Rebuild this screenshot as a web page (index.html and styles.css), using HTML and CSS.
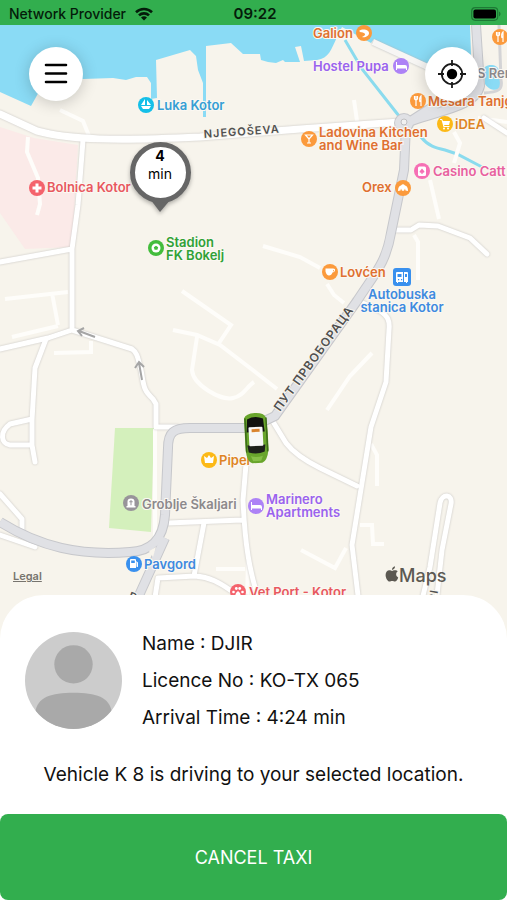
FILE: index.html
```html
<!DOCTYPE html>
<html lang="en">
<head>
  <meta charset="UTF-8">
  <meta name="viewport" content="width=device-width, initial-scale=1.0">
  <title>Taxi</title>
  <link rel="stylesheet" href="styles.css">
</head>
<body>
<div class="app">
  <header class="status-bar">
    <div class="carrier">
      <span>Network Provider</span>
      <svg width="20" height="14" viewBox="0 0 20 14" aria-hidden="true">
        <path d="M2 5.2a11.5 11.5 0 0 1 16 0M5 8.4a7.2 7.2 0 0 1 10 0" fill="none" stroke="#041c0a" stroke-width="2.6"/>
        <path d="M7 10.6a4.4 4.4 0 0 1 6 0L10 13.6z" fill="#041c0a"/>
      </svg>
    </div>
    <span class="clock">09:22</span>
    <svg class="battery" width="30" height="14" viewBox="0 0 30 14" aria-hidden="true">
      <rect x=".7" y=".7" width="26" height="12.6" rx="3.5" fill="none" stroke="#1d7a35" stroke-width="1.2"/>
      <rect x="2.4" y="2.4" width="22.6" height="9.2" rx="2" fill="#000"/>
      <path d="M28 4.6v4.8c2-.8 2-4 0-4.8z" fill="#1d7a35"/>
    </svg>
  </header>

  <main class="map">
    <svg class="map-canvas" viewBox="0 25 507 614" preserveAspectRatio="xMidYMin slice" role="img" aria-label="Map of Kotor">
      <!-- sea -->
      <path class="water" d="M0 25H470L472 83L425 66L374 39L371 43L342 27L337 37C331 50 329 58 317 60L304 61L301 46L295 47L300 62L285 62L283 60L276 63L268 62L261 60L260 54H243L231 43L206 46V117H203V83L198 70L196 56L190 50L156 60L157 98L151 99L151 83L147 77L136 77L126 80L113 78L83 79L40 90L31 106L0 92Z"/>
      <path class="pier" d="M373 42L432 69"/>
      <path class="water" d="M484 72c-3-8 14-10 15-1l2 17c-6 4-13 1-16-4z"/>
      <path class="stream" d="M345 40L362 69L399 116M421 137C428 146 436 148 445 150L457 154L482 167"/>

      <!-- areas -->
      <path class="hospital" d="M0 127L34 138L78 145L72 247L25 249L0 213Z"/>
      <path class="park" d="M115 428H154L151 532L109 528Z"/>

      <!-- small lanes -->
      <g class="lanes">
        <path d="M60 110L83 121L89 136M28 137L27 152L38 178L40 204L37 215"/>
        <path d="M5 299L68 292M52 293L58 325M12 337L58 326M54 353L91 352V341"/>
        <path d="M182 291L231 325L219 343M173 330L197 335L220 345L254 371L277 389M197 337L192 370C193 385 221 401 233 398C244 396 246 387 254 382"/>
        <path d="M263 246L300 257L320 268M327 284L334 295L344 303"/>
        <path d="M430 180L439 219M414 235L418 242V280M357 121L354 100"/>
        <path d="M454 132L460 143L454 163M478 118L507 122M327 410L350 376L372 353"/>
        <path d="M371 444L377 455V486M360 525H372L373 544H384M301 550L335 568L346 548"/>
        <path d="M155 429V540M216 569H245M248 560L247 600"/>
      </g>

      <!-- streets -->
      <g class="streets">
        <path d="M0 114L37 131C70 140 115 141 200 137L300 129L400 122"/>
        <path class="street" d="M83 140L78 205L72 249L72 330M0 262L72 249M0 349L48 338L72 330L132 349C138 353 138 360 141 370C144 386 143 390 153 399L156 404V427H178"/>
        <path class="street" d="M46 339L35 368L32 420V445L35 462M32 419L10 424C-1 432 1 444 10 445H32"/>
        <path class="street" d="M396 230L411 230L419 225L438 226L470 238L487 254"/>
        <path class="street" d="M356 300L380 311C388 316 390 321 389 330L386 382L371 427L352 545L359 604"/>
        <path class="street" d="M272 420L286 443C295 455 310 463 320 468L357 486"/>
        <path class="street" d="M0 494L22 519V535M0 535L35 547M168 523L242 520M246 464L243 500C245 545 249 570 260 604M204 523L194 576M154 604L158 578L195 576C210 577 220 583 230 590L250 600"/>
        <path class="street" d="M421 604L430 567L440 503C442 493 453 494 451 504L442 550L436 604"/>
        <path class="street" d="M484 118L507 133"/>
      </g>

      <!-- main road -->
      <g class="road-edge">
        <path d="M0 522C40 547 80 556 130 552C150 551 163 541 165 515L168 448C168 432 174 428 190 428L250 428L275 416L357 301C375 273 386 263 391 233L404 170L406 125"/>
        <path d="M165 538L136 602M400 126C425 112 475 110 480 86L476 25M406 124L440 102"/>
        <circle cx="404" cy="123" r="5"/>
      </g>
      <g class="road">
        <path d="M0 522C40 547 80 556 130 552C150 551 163 541 165 515L168 448C168 432 174 428 190 428L250 428L275 416L357 301C375 273 386 263 391 233L404 170L406 125"/>
        <path d="M165 538L136 602M400 126C425 112 475 110 480 86L476 25M406 124L440 102"/>
        <circle cx="404" cy="123" r="5"/>
      </g>
      <path d="M149 551L156 547L153 557Z" fill="#f8f5ed"/>
      <circle class="roundabout" cx="404" cy="122" r="3"/>
      <path class="road-thin" d="M484 93C498 92 503 90 501 80L499 25"/>

      <!-- one way arrows -->
      <g class="arrows">
        <path d="M95 337L79 331M84 328L78 331L82 336"/>
        <path d="M142 380L139 363M135 368L139 362L144 367"/>
      </g>

      <!-- street names -->
      <text class="street-name" transform="translate(204 138) rotate(-4)">NJEGOŠEVA</text>
      <text class="street-name large" transform="translate(280 412) rotate(-54)">ПУТ ПРВОБОРАЦА</text>
      <text class="street-name" transform="translate(128 599) rotate(20)">D</text>
      <text class="street-name" transform="translate(436 602) rotate(-80)">RI</text>

      <!-- places -->
      <g class="place cyan">
        <circle cx="146" cy="105" r="8"/>
        <path class="glyph" d="M145 99v6h-4zM147 100l4 5h-4zM141 106h10l-2 3h-6z"/>
        <text x="157" y="110">Luka Kotor</text>
      </g>
      <g class="place orange">
        <circle cx="364" cy="33" r="8"/>
        <path class="glyph" d="M359 31c4-3 10-1 10 2s-4 5-7 4c3-1 4-3 2-4s-3 0-5-2z"/>
        <text x="313" y="38">Galion</text>
      </g>
      <g class="place violet">
        <circle cx="401" cy="66" r="8"/>
        <path class="glyph" d="M396 62h1v3h8q2 0 2 2v3h-1v-1.500h-9V70h-1z"/>
        <text x="313" y="71">Hostel Pupa</text>
      </g>
      <g class="place orange">
        <circle cx="500" cy="37" r="8"/>
        <path class="glyph-line" d="M496.500 32v3q1.500 2 3 0v-3M498 32v10M503 42V32q-2 2-1 6"/>
      </g>
      <g class="place orange">
        <circle cx="418" cy="101" r="8"/>
        <path class="glyph-line" d="M414.500 96v3q1.500 2 3 0v-3M416 96v10M421 106V96q-2 2-1 6"/>
        <text x="428" y="106">Mesara Tanjg</text>
      </g>
      <g class="place gray">
        <text x="477" y="78">S Ren</text>
      </g>
      <g class="place yellow">
        <circle cx="445" cy="124" r="8"/>
        <path class="glyph" d="M440 119h2l1 2h7l-1 4h-5l.5 1h5v1h-6l-2-7h-1.500z"/>
        <circle class="glyph" cx="444" cy="128.500" r="1"/><circle class="glyph" cx="448" cy="128.500" r="1"/>
        <text x="455" y="129">iDEA</text>
      </g>
      <g class="place orange">
        <circle cx="309" cy="139" r="8"/>
        <path class="glyph-line" d="M305.500 135h7l-3.500 4zM309 139v4M307 143h4"/>
        <text x="319" y="137">Ladovina Kitchen</text>
        <text x="319" y="150">and Wine Bar</text>
      </g>
      <g class="place pink">
        <circle cx="422" cy="171" r="8"/>
        <rect class="glyph" x="418" y="166.500" width="8" height="9.500" rx="1.500"/>
        <path d="M422 168.500l2.500 3q0 1.500-2 1.300l.5 1h-2l.5-1q-2 .2-2-1.300z"/>
        <text x="433" y="176">Casino Catt</text>
      </g>
      <g class="place orange">
        <circle cx="403" cy="188" r="8"/>
        <path class="glyph" d="M398 191q0-5 3-5.500q2-2.500 4 0q3 .5 3 5.500l-2.500-.5-.5-2-1 2.200h-2l-1-2.200-.5 2z"/>
        <text x="362" y="192">Orex</text>
      </g>
      <g class="place red">
        <circle cx="37" cy="188" r="8"/>
        <path class="glyph" d="M35.500 183.500h3v3h3v3h-3v3h-3v-3h-3v-3h3z"/>
        <text x="47" y="192">Bolnica Kotor</text>
      </g>
      <g class="place green">
        <circle cx="156" cy="248" r="8"/>
        <circle class="glyph" cx="156" cy="248" r="4.500"/>
        <path d="M156 245.700l2.200 1.600-.8 2.500h-2.800l-.8-2.500z"/>
        <text x="166" y="247">Stadion</text>
        <text x="166" y="260">FK Bokelj</text>
      </g>
      <g class="place orange">
        <circle cx="330" cy="272" r="8"/>
        <path class="glyph" d="M325.500 268.500h7.500q2.500 0 2 2t-2.500 2q-1 3-3.500 3t-3.500-4zM333 269.800v1.800q1-.2 1-1z"/>
        <text x="340" y="277">Lovćen</text>
      </g>
      <g class="place blue">
        <rect x="393" y="268" width="18" height="18" rx="3"/>
        <path class="glyph" d="M396 273q0-1 1-1h6v10h-5v1h-1v-1h-1zM404 272h3q1 0 1 1v9h-1v1h-1v-1h-2z"/>
        <path d="M397.500 274h4v3h-4zM405 274h2v3h-2zM398 279h1.200v1.200H398zM401 279h1.200v1.200H401z"/>
        <text class="middle" x="402" y="299">Autobuska</text>
        <text class="middle" x="402" y="312">stanica Kotor</text>
      </g>
      <g class="place yellow">
        <circle cx="209" cy="460" r="8"/>
        <path class="glyph" d="M204 456l3 2 2-3 2 3 3-2-1 7h-8z"/>
        <text x="219" y="465">Piper</text>
      </g>
      <g class="place gray">
        <circle cx="131" cy="503" r="8"/>
        <path class="glyph" d="M127.500 506v-4.500q0-3 3.500-3t3.500 3v4.500h1v1.500h-9V506z"/>
        <path d="M130.500 500h1v1.200h1.200v1h-1.200v3h-1v-3h-1.200v-1h1.200z"/>
        <text x="142" y="509">Groblje Škaljari</text>
      </g>
      <g class="place violet">
        <circle cx="256" cy="506" r="8"/>
        <path class="glyph" d="M251 502h1v3h8q2 0 2 2v3h-1v-1.500h-9v1.500h-1z"/>
        <text x="266" y="504">Marinero</text>
        <text x="266" y="517">Apartments</text>
      </g>
      <g class="place blue">
        <circle cx="134" cy="564" r="8"/>
        <path class="glyph" d="M130 560q0-1 1-1h4q1 0 1 1v8h-6zM136 561l2 1.500v4q-.5 1-1.500 0v-3z"/>
        <path d="M131.200 560.500h3.600v2.500h-3.600z"/>
        <text x="144" y="569">Pavgord</text>
      </g>
      <g class="place red">
        <circle cx="238" cy="592" r="8"/>
        <g class="glyph">
          <circle cx="233.500" cy="592" r="1.300"/><circle cx="236.300" cy="588.500" r="1.400"/>
          <circle cx="239.700" cy="588.500" r="1.400"/><circle cx="242.500" cy="592" r="1.300"/>
          <path d="M238 591q3 2 3 5h-6q0-3 3-5z"/>
        </g>
        <text x="249" y="597">Vet Port - Kotor</text>
      </g>

      <!-- map provider -->
      <path class="apple" transform="translate(385 566)" d="M9.500 4.300C10.500 4.300 11.700 4 12.700 5.600C10.400 7 10.800 10.400 13.200 11.400C12.600 13.200 11.400 15.500 9.900 15.500C8.800 15.500 8.500 14.900 7.200 14.900S5.500 15.500 4.500 15.500C2.700 15.500.6 12 .6 8.900C.6 6 2.400 4.300 4.300 4.300C5.500 4.300 6.400 5 7.100 5C7.800 5 8.600 4.300 9.500 4.300ZM7 3.900C6.900 2 8.300.5 10 .3C10.200 2.300 8.600 3.900 7 3.900Z"/>
      <text class="provider" x="399" y="582">Maps</text>

      <!-- pickup point -->
      <g class="pickup">
        <path d="M150 199L160 212L171 199Z" fill="#666"/>
        <circle cx="160.500" cy="172.500" r="28" fill="#fff" stroke="#666" stroke-width="5"/>
      </g>
      <text class="eta-value" x="160" y="161">4</text>
      <text class="eta-unit" x="160" y="179">min</text>

      <!-- taxi -->
      <g transform="translate(256 438) rotate(-3)">
        <path d="M-11-20Q-9-25 0-25T11-20L12-6V12Q10 24 5 25H-5Q-10 24-11 12V-6Z" fill="#69a52c"/>
        <path d="M-10-20L-10 14M11-20V14" stroke="#3c6d18" stroke-width="1.500" fill="none"/>
        <path d="M-8-19Q0-23 8-19L9-6H-9Z" fill="#10120f"/>
        <path d="M-9 7H9L8 14Q0 17-8 14Z" fill="#1d211b"/>
        <rect x="-7" y="-11" width="14" height="19" rx="1" fill="#f7f8f7"/>
        <rect x="-4" y="-9" width="8" height="3" fill="#d98430"/>
        <path d="M-6 18Q0 20 6 18L4 23H-4Z" fill="#87bf48"/>
      </g>
    </svg>

    <div class="map-buttons">
      <button class="round-button" type="button" aria-label="Menu">
        <svg width="24" height="22" viewBox="0 0 24 22">
          <path d="M2 2h20M2 10.500h20M2 19h20" stroke="#000" stroke-width="2.600" stroke-linecap="round"/>
        </svg>
      </button>
      <button class="round-button" type="button" aria-label="My location">
        <svg width="30" height="30" viewBox="0 0 30 30">
          <circle cx="15" cy="15" r="10.200" fill="none" stroke="#1a1a1a" stroke-width="1.800"/>
          <circle cx="15" cy="15" r="5.200" fill="#000"/>
          <path d="M15 1v6M15 23v6M1 15h6M23 15h6" stroke="#1a1a1a" stroke-width="1.800"/>
        </svg>
      </button>
    </div>
    <a class="legal" href="#legal">Legal</a>
  </main>

  <section class="sheet">
    <div class="driver">
      <svg class="avatar" viewBox="0 0 96 96" role="img" aria-label="Driver">
        <clipPath id="avatar-clip"><circle cx="48" cy="48" r="48"/></clipPath>
        <g clip-path="url(#avatar-clip)">
          <rect width="96" height="96" fill="#ccc"/>
          <circle cx="48" cy="32" r="19" fill="#a9a9a9"/>
          <path d="M10 96V80C12 64 26 60 48 60S84 64 86 80V96Z" fill="#a9a9a9"/>
        </g>
      </svg>
      <div class="driver-info">
        <p>Name : DJIR</p>
        <p>Licence No : KO-TX 065</p>
        <p>Arrival Time : 4:24 min</p>
      </div>
    </div>
    <p class="message">Vehicle K 8 is driving to your selected location.</p>
    <button class="cancel" type="button">CANCEL TAXI</button>
  </section>
</div>
</body>
</html>
```
FILE: styles.css
```css
* {
  box-sizing: border-box;
}
body {
  margin: 0;
  font-family: Inter, Roboto, sans-serif;
  color: #111;
  background: #fff;
}
p {
  margin: 0;
}
.app {
  min-height: 100vh;
  display: flex;
  flex-direction: column;
}

/* status bar */
.status-bar {
  display: grid;
  grid-template-columns: 1fr auto 1fr;
  align-items: center;
  height: 25px;
  padding: 2px 6px 0 9px;
  background: #32ae4e;
  color: #041c0a;
  font-size: 14px;
}
.carrier {
  display: flex;
  align-items: center;
  gap: 8px;
  font-weight: 500;
}
.clock {
  font-size: 15px;
  font-weight: 600;
}
.battery {
  justify-self: end;
}

/* map */
.map {
  position: relative;
  flex: 1;
  min-height: 360px;
  background: #f7f4ec;
  overflow: hidden;
}
.map-canvas {
  position: absolute;
  inset: 0;
  width: 100%;
  height: 100%;
}
.water {
  fill: #8adbf5;
}
.stream {
  fill: none;
  stroke: #8adbee;
  stroke-width: 3;
}
.pier {
  stroke: #f7f6f4;
  stroke-width: 6;
  filter: drop-shadow(0 0 1px #b5b8ba);
}
.hospital {
  fill: #fbeae8;
}
.park {
  fill: #d4f0bc;
}
.lanes {
  fill: none;
  stroke: #fefdfa;
  stroke-width: 4;
}
.streets {
  fill: none;
  stroke: #fff;
  stroke-width: 7;
  stroke-linejoin: round;
  stroke-linecap: round;
  filter: drop-shadow(0 0 1px #c4c2c0);
}
.street {
  stroke-width: 5;
}
.road-edge,
.road {
  fill: none;
  stroke: #c6c7cb;
  stroke-width: 10;
  stroke-linejoin: round;
}
.road {
  stroke: #e0e1e5;
  stroke-width: 8;
}
.road-thin {
  fill: none;
  stroke: #d4d4d6;
  stroke-width: 3;
}
.roundabout {
  fill: #f1f1f1;
  stroke: #c0c0c2;
}
.arrows {
  fill: none;
  stroke: #a5a5a5;
  stroke-width: 2;
}
.street-name {
  font-size: 11px;
  font-weight: 600;
  letter-spacing: 1px;
  fill: #505050;
  stroke: #f7f4ec;
  stroke-width: 2px;
  paint-order: stroke;
}
.street-name.large {
  font-size: 12px;
}
.place text {
  font-size: 13px;
  font-weight: 600;
  stroke: #fbf8f2;
  stroke-width: 2px;
  paint-order: stroke;
}
.place .middle {
  text-anchor: middle;
}
.place .glyph {
  fill: #fff;
}
.place .glyph-line {
  fill: none;
  stroke: #fff;
  stroke-width: 1.2;
}
.cyan { fill: #14bfe8; }
.cyan text { fill: #369fd5; }
.orange { fill: #fb9a3c; }
.orange text { fill: #df7030; }
.violet { fill: #ad82f6; }
.violet text { fill: #9a63ee; }
.yellow { fill: #fcb917; }
.yellow text { fill: #de8425; }
.pink { fill: #f66fb4; }
.pink text { fill: #e8609f; }
.red { fill: #f4636c; }
.red text { fill: #e8585f; }
.green { fill: #43bd3c; }
.green text { fill: #30a136; }
.blue { fill: #3990ee; }
.blue text { fill: #3e8ae0; }
.gray { fill: #98949a; }
.gray text { fill: #8c898c; }

.apple {
  fill: #5c5952;
}
.provider {
  font-size: 18px;
  font-weight: 500;
  fill: #5c5952;
}
.pickup {
  filter: drop-shadow(0 2px 2px rgba(0, 0, 0, 0.3));
}
.eta-value,
.eta-unit {
  font-size: 14px;
  text-anchor: middle;
}
.eta-value {
  font-weight: 700;
}
.map-buttons {
  position: relative;
  display: flex;
  justify-content: space-between;
  padding: 22px 28px 0 29px;
}
.round-button {
  display: flex;
  align-items: center;
  justify-content: center;
  width: 54px;
  height: 54px;
  padding: 0;
  border: none;
  border-radius: 50%;
  background: #fff;
  box-shadow: 0 2px 16px rgba(0, 0, 0, 0.2);
  cursor: pointer;
}
.legal {
  position: absolute;
  left: 13px;
  bottom: 55px;
  font-size: 11px;
  font-weight: 600;
  line-height: 16px;
  color: #77746e;
}

/* bottom sheet */
.sheet {
  position: relative;
  margin-top: -44px;
  padding-top: 30px;
  border-radius: 44px 44px 0 0;
  background: #fff;
}
.driver {
  display: flex;
  align-items: center;
  gap: 20px;
  padding: 0 25px;
}
.avatar {
  width: 97px;
  height: 97px;
  flex: none;
}
.driver-info {
  font-size: 19px;
  line-height: 37px;
}
.message {
  margin: 25px 0;
  font-size: 19px;
  line-height: 28px;
  text-align: center;
}
.cancel {
  display: block;
  width: 100%;
  height: 86px;
  border: none;
  border-radius: 8px;
  background: #32ae4e;
  color: #fff;
  font-family: inherit;
  font-size: 18px;
  cursor: pointer;
}
```
